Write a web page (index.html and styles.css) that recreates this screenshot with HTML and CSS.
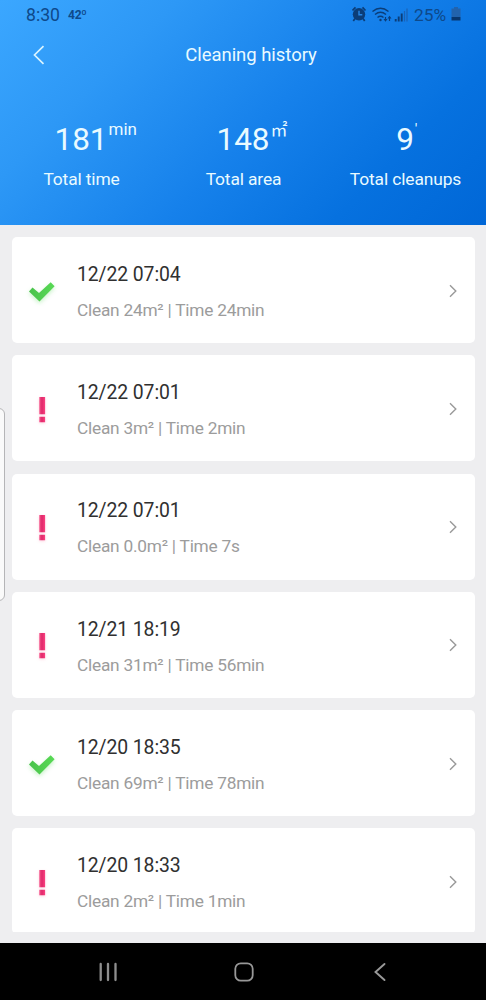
FILE: index.html
```html
<!DOCTYPE html>
<html lang="en">
<head>
<meta charset="utf-8">
<title>Cleaning history</title>
<link rel="stylesheet" href="styles.css">
</head>
<body>
<svg width="0" height="0" class="defs">
  <defs>
    <linearGradient id="green" x1="0" x2="1"><stop offset="0" stop-color="#49c24b"/><stop offset="1" stop-color="#58da55"/></linearGradient>
    <linearGradient id="pink" x1="0" x2="1"><stop offset="0" stop-color="#f5558b"/><stop offset=".45" stop-color="#e0296a"/><stop offset="1" stop-color="#fa4080"/></linearGradient>
    <symbol id="check" viewBox="0 0 30 24"><path d="M2 11.5 5.500 7.500 12 13 23.700 2.300 27.600 6.200 12.500 21.500Z" fill="url(#green)"/></symbol>
    <symbol id="alert" viewBox="0 0 30 30"><path d="M12.300 2h5.800v17.300h-5.800zM12.300 21.800h5.800v5.400h-5.800z" fill="url(#pink)"/></symbol>
    <symbol id="next" viewBox="0 0 8 14"><path d="m1 1.200 5.800 5.800L1 12.800" fill="none" stroke="#999" stroke-width="1.400"/></symbol>
  </defs>
</svg>
<div class="screen">
  <header class="header">
    <div class="status">
      <span class="clock">8:30</span><span class="temp">42º</span>
      <svg class="status-icons" width="58" height="18" viewBox="0 0 58 18">
        <circle cx="7" cy="9.300" r="6.200" fill="#0b3d78"/>
        <path d="M.5 5.500 3.500 2.300M10.500 2.300l3 3.200M3 13.500 1.300 16M11 13.500l1.700 2.500" stroke="#0b3d78" stroke-width="1.700"/>
        <path d="M7 5.800V9.800H10.300" fill="none" stroke="#2585e4" stroke-width="1.400"/>
        <path d="M20.500 6.500q8-6.500 16 0M23 9.500q5.500-4.500 11 0M25.500 12.500q3-2.500 6 0" fill="none" stroke="#0b3d78" stroke-width="1.500"/>
        <circle cx="28.500" cy="15" r="1.200" fill="#0b3d78"/>
        <path d="M33.500 12V15M37.500 16V13" stroke="#0b3d78" stroke-width="1.200"/>
        <path d="m31.500 14 2 2.800 2-2.800zM35.500 13.500l2-2.800 2 2.800z" fill="#0b3d78"/>
        <path d="M43.700 16.500V14M46.700 16.500V11.500M49.700 16.500V8.500" stroke="#0b3d78" stroke-width="1.900"/>
        <path d="M52.500 16.500V6M55 16.500V3.500" stroke="#1b62b4" stroke-width="1.200"/>
      </svg>
      <span class="percent">25%</span>
      <svg class="battery" width="10" height="16" viewBox="0 0 10 16"><path d="M3 1h4v1.500h2.500V11h-9V2.500H3z" fill="#2263ad"/><path d="M.5 11h9v3.500h-9z" fill="#08366e"/></svg>
    </div>
    <div class="titlebar">
      <svg class="back" width="12" height="20" viewBox="0 0 12 20"><path d="M10.500 1.200 1.500 10l9 8.800" fill="none" stroke="#d9f4ff" stroke-width="1.700"/></svg>
      <h1 class="title">Cleaning history</h1>
    </div>
    <div class="stats">
      <div class="stat"><div class="value">181<span class="unit">min</span></div><div class="label">Total time</div></div>
      <div class="stat"><div class="value">148<span class="unit area">㎡</span></div><div class="label">Total area</div></div>
      <div class="stat"><div class="value">9<span class="unit tick">'</span></div><div class="label">Total cleanups</div></div>
    </div>
  </header>
  <main class="list">
    <article class="card"><svg class="mark check"><use href="#check"/></svg><div class="info"><div class="date">12/22 07:04</div><div class="detail">Clean 24m² | Time 24min</div></div><svg class="next"><use href="#next"/></svg></article>
    <article class="card"><svg class="mark alert"><use href="#alert"/></svg><div class="info"><div class="date">12/22 07:01</div><div class="detail">Clean 3m² | Time 2min</div></div><svg class="next"><use href="#next"/></svg></article>
    <article class="card"><svg class="mark alert"><use href="#alert"/></svg><div class="info"><div class="date">12/22 07:01</div><div class="detail">Clean 0.0m² | Time 7s</div></div><svg class="next"><use href="#next"/></svg></article>
    <article class="card"><svg class="mark alert"><use href="#alert"/></svg><div class="info"><div class="date">12/21 18:19</div><div class="detail">Clean 31m² | Time 56min</div></div><svg class="next"><use href="#next"/></svg></article>
    <article class="card"><svg class="mark check"><use href="#check"/></svg><div class="info"><div class="date">12/20 18:35</div><div class="detail">Clean 69m² | Time 78min</div></div><svg class="next"><use href="#next"/></svg></article>
    <article class="card"><svg class="mark alert"><use href="#alert"/></svg><div class="info"><div class="date">12/20 18:33</div><div class="detail">Clean 2m² | Time 1min</div></div><svg class="next"><use href="#next"/></svg></article>
  </main>
  <nav class="nav">
    <svg width="20" height="20" viewBox="0 0 20 20"><path d="M2.700 2v16M10 2v16M17.500 2v16" stroke="#8e8e8e" stroke-width="2.300" stroke-linecap="round"/></svg>
    <svg width="20" height="20" viewBox="0 0 20 20"><rect x="1.300" y="1.300" width="17.400" height="17.400" rx="5.500" fill="none" stroke="#989898" stroke-width="1.800"/></svg>
    <svg width="20" height="20" viewBox="0 0 20 20"><path d="M14.500 2 5.500 10l9 8" fill="none" stroke="#999" stroke-width="1.900" stroke-linecap="round"/></svg>
  </nav>
  <div class="edge-handle"></div>
</div>
</body>
</html>
```
FILE: styles.css
```css
* { box-sizing: border-box; }
body { margin: 0; font-family: Roboto, sans-serif; }
svg { display: block; flex: none; }
.defs { position: absolute; }
.screen { position: relative; width: 486px; height: 1000px; overflow: hidden; background: #eeeef0; display: flex; flex-direction: column; }
.header { flex: none; height: 225px; background: linear-gradient(135deg, #3ba7ff 0%, #2d98f6 25%, #1681eb 54%, #0671df 78%, #0067d7 100%); color: #e9faff; }
.status { height: 30px; display: flex; align-items: center; padding: 0 26px 0 26px; color: #0e498a; line-height: 30px; }
.clock { width: 42px; font-size: 17.6px; }
.temp { font-size: 12px; font-weight: 700; letter-spacing: -.2px; }
.status-icons { margin: -2px 4px 0 auto; }
.percent { font-size: 17.3px; width: 37px; white-space: nowrap; }
.battery { margin-right: -1px; margin-top: -2px; }
.titlebar { height: 50px; display: grid; grid-template-columns: 60px 1fr 60px; align-items: center; }
.back { margin-left: 33px; }
.title { margin: 0 0 0 16px; text-align: center; font-size: 18.5px; letter-spacing: -.03px; font-weight: 400; line-height: 24px; }
.stats { display: grid; grid-template-columns: repeat(3, 162px); padding-top: 40px; }
.stat { display: flex; flex-direction: column; align-items: center; }
.value { position: relative; font-size: 31.5px; line-height: 40px; }
.unit { position: absolute; left: 100%; top: -1px; margin-left: 1px; font-size: 17px; line-height: 20px; }
.area { top: -1px; font-family: "Noto Sans CJK SC", sans-serif; }
.tick { font-size: 15px; top: -1px; margin-left: 1px; }
.label { margin-top: 7px; margin-left: 1px; font-size: 17.4px; letter-spacing: -.13px; line-height: 24px; white-space: nowrap; }
.list { flex: none; height: 707px; overflow: hidden; padding: 12px 11px 0 12px; display: flex; flex-direction: column; gap: 12.25px; }
.card { flex: none; height: 106px; border-radius: 5px; background: #fff; display: grid; grid-template-columns: 65px 1fr 8px; align-items: center; padding-right: 18px; }
.mark { width: 30px; margin-left: 15px; }
.check { height: 24px; margin-top: 3px; filter: drop-shadow(0 2px 2px #59d95b55); }
.alert { height: 30px; margin-top: 3px; filter: drop-shadow(0 1px 1.5px #f65b8c44); }
.info { display: flex; flex-direction: column; gap: 9px; padding-top: 2.5px; }
.date { font-size: 19.4px; letter-spacing: -.1px; line-height: 28px; color: #303030; }
.detail { font-size: 17.3px; letter-spacing: -.23px; line-height: 24px; color: #9c9c9c; white-space: nowrap; }
.next { width: 8px; height: 14px; margin-top: 1px; }
.nav { margin-top: auto; height: 57px; background: #000; display: flex; align-items: center; justify-content: space-between; padding: 0 96px 0 98px; }
.edge-handle { position: absolute; left: -8px; top: 408px; width: 13px; height: 193px; border: 1px solid #b5b5b7; border-radius: 6px; background: #fafafa; }
```
